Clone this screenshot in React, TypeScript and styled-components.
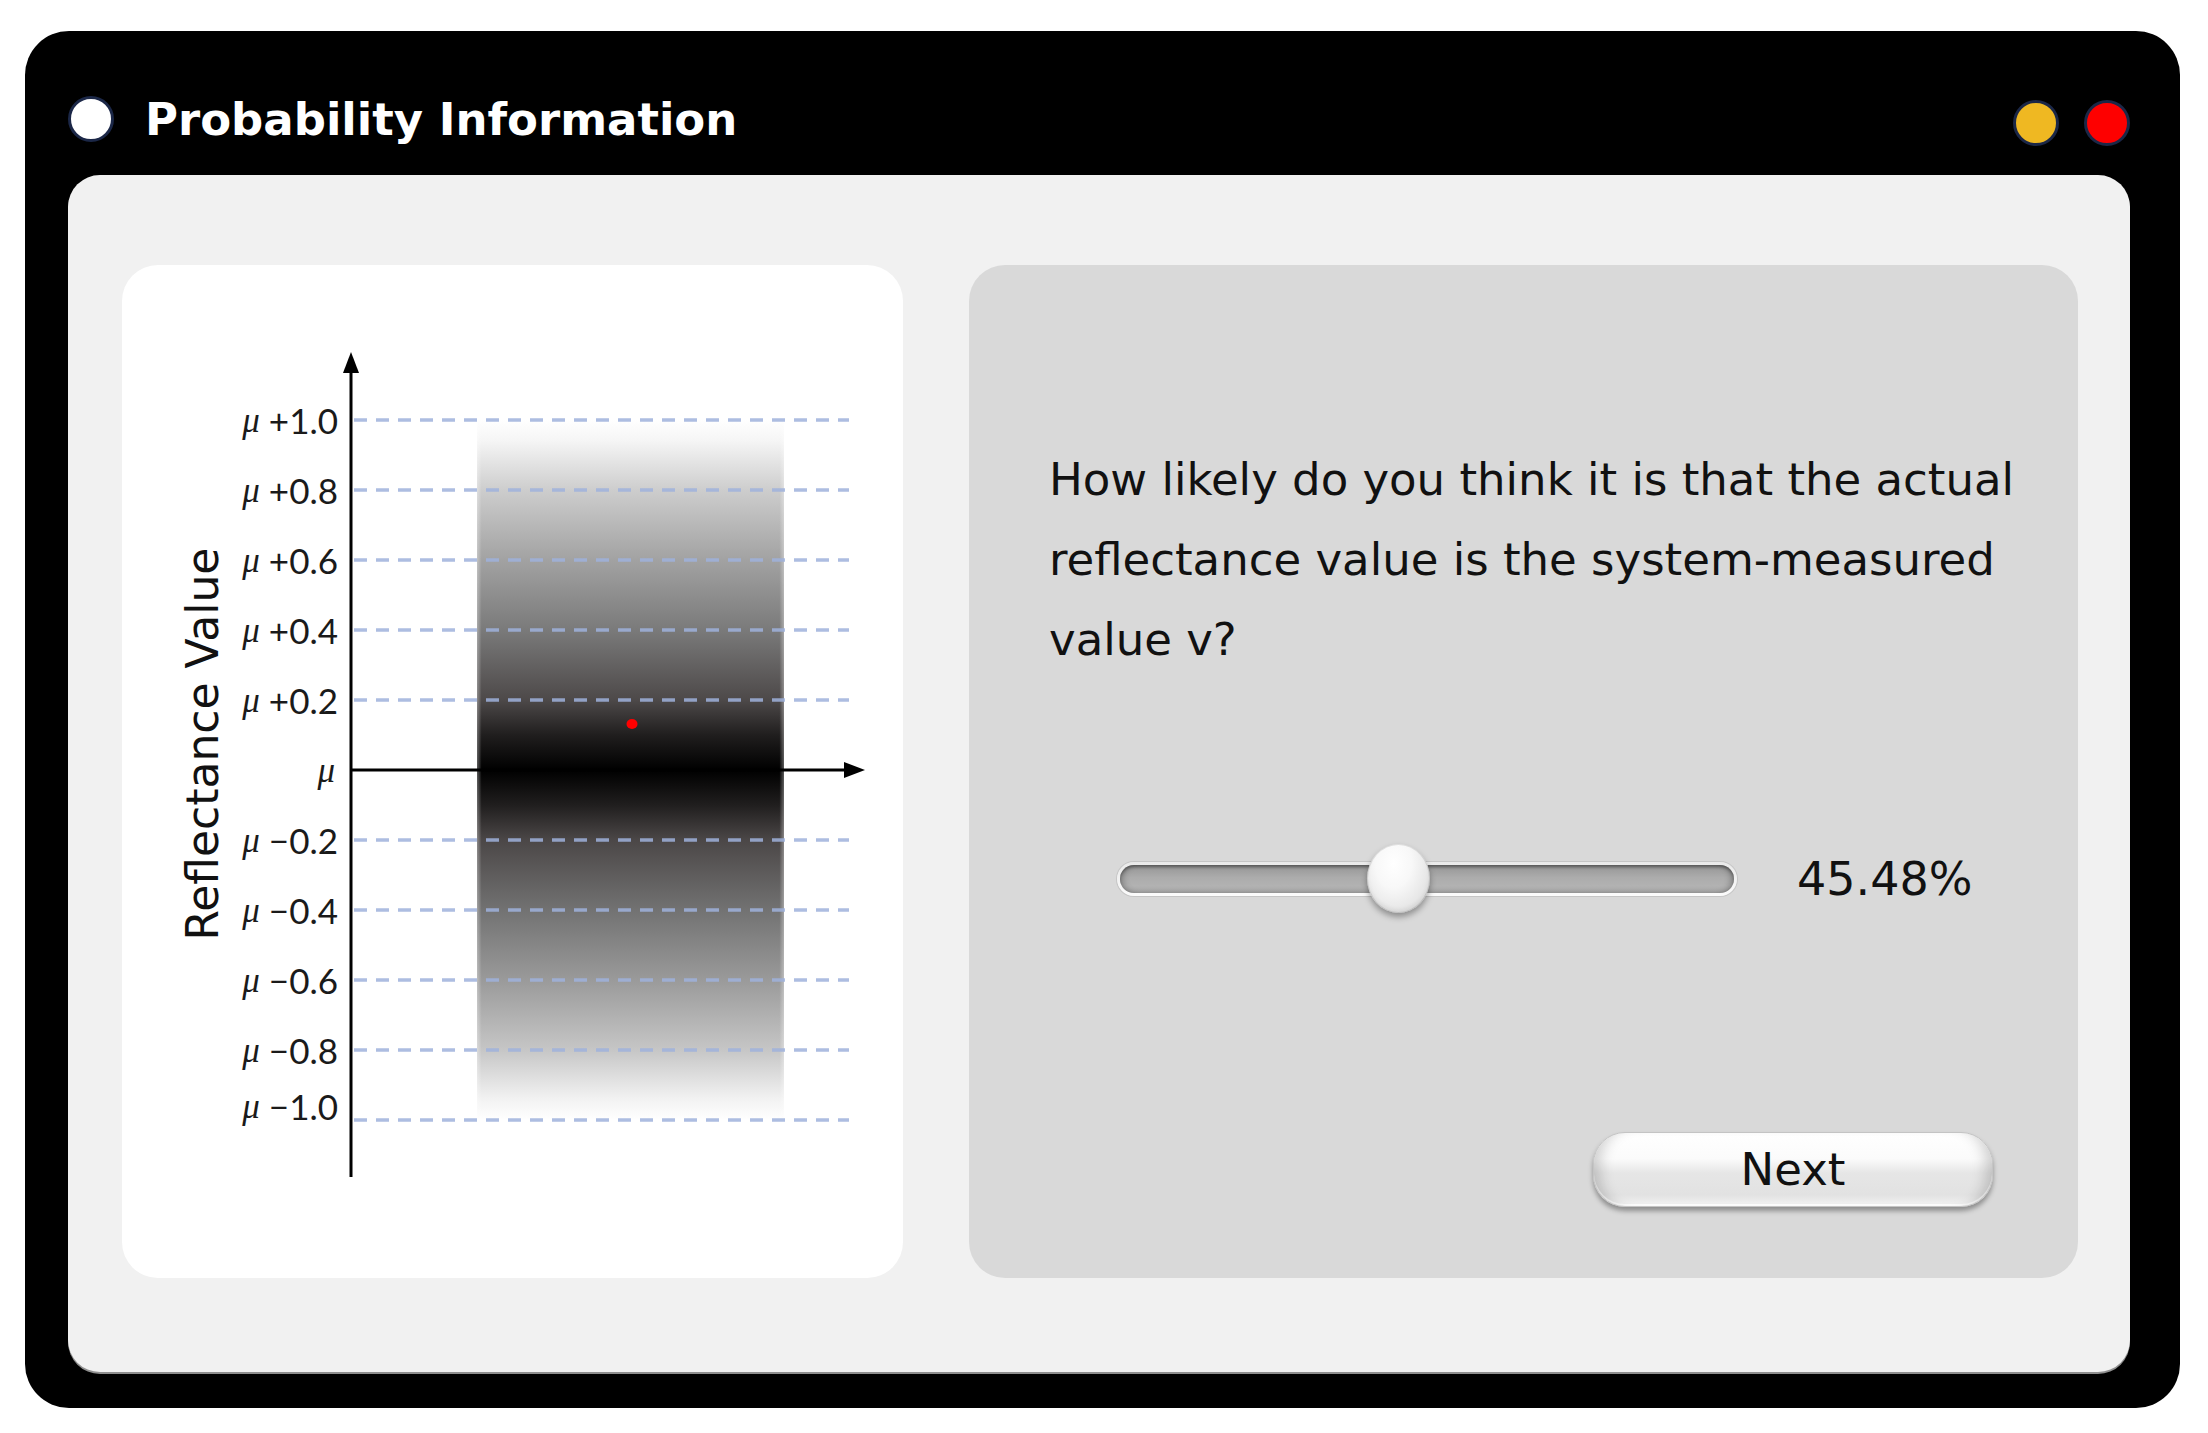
import React from "react";
import styled, { createGlobalStyle } from "styled-components";

const GlobalStyle = createGlobalStyle`
  html, body {
    margin: 0;
    padding: 0;
    background: #ffffff;
  }
  * { box-sizing: border-box; }
`;

const SANS = `"DejaVu Sans", Verdana, sans-serif`;

const Window = styled.div`
  margin: 31px 0 0 25px;
  width: 2155px;
  height: 1377px;
  background: #000000;
  border-radius: 44px;
  display: flex;
  flex-direction: column;
  padding: 0 50px 36px 43px;
`;

const TitleBar = styled.div`
  height: 144px;
  flex: 0 0 144px;
  padding-top: 32px;
  display: flex;
  align-items: center;
`;

const TitleDot = styled.span<{ $color: string; $offset?: number }>`
  width: 46px;
  height: 46px;
  border-radius: 50%;
  background: ${(p) => p.$color};
  border: 3px solid #1b2747;
  flex: 0 0 auto;
  margin-top: ${(p) => p.$offset ?? 0}px;
`;

const Title = styled.h1`
  margin: 0 0 0 31px;
  font-family: ${SANS};
  font-weight: 700;
  font-size: 45px;
  line-height: normal;
  color: #ffffff;
  flex: 1;
`;

const WindowControls = styled.div`
  display: flex;
  gap: 25px;
  align-items: center;
`;

const Panel = styled.div`
  flex: 1;
  background: #f1f1f1;
  border-radius: 32px;
  padding: 90px 52px 94px 54px;
  display: flex;
  gap: 66px;
  box-shadow: 0 2px 0 #8f8f8f;
`;

const ChartCard = styled.div`
  width: 781px;
  flex: 0 0 781px;
  background: #ffffff;
  border-radius: 36px;
  overflow: hidden;
`;

const ChartSvg = styled.svg`
  display: block;
  width: 781px;
  height: 1013px;
`;

const QuestionCard = styled.div`
  flex: 1;
  background: #d9d9d9;
  border-radius: 36px;
  padding: 175px 38px 71px 80px;
  display: flex;
  flex-direction: column;
`;

const Question = styled.p`
  margin: 0;
  font-family: ${SANS};
  font-size: 45px;
  line-height: 80px;
  color: #111111;
  height: 240px;
`;

const SliderRow = styled.div`
  margin: 164px 0 0 68px;
  height: 70px;
  display: flex;
  align-items: center;
`;

const SliderWrap = styled.div`
  position: relative;
  width: 620px;
  height: 70px;
  display: flex;
  align-items: center;
`;

const Track = styled.div`
  width: 100%;
  height: 34px;
  border-radius: 17px;
  padding: 3px;
  background: linear-gradient(to bottom, #e9e9e9, #fbfbfb);
  box-shadow: 0 0 0 1px rgba(160, 160, 160, 0.35);
`;

const TrackFill = styled.div`
  width: 100%;
  height: 100%;
  border-radius: 14px;
  background: linear-gradient(
    to bottom,
    #878787 0%,
    #9e9e9e 18%,
    #acacac 45%,
    #b2b2b2 75%,
    #a3a3a3 100%
  );
  box-shadow: inset 0 2px 3px rgba(0, 0, 0, 0.3),
    inset 6px 0 6px -3px rgba(0, 0, 0, 0.25),
    inset -6px 0 6px -3px rgba(0, 0, 0, 0.25);
`;

const Thumb = styled.div`
  position: absolute;
  top: 0;
  width: 63px;
  height: 69px;
  border-radius: 50%;
  background: radial-gradient(
    ellipse at 42% 28%,
    #ffffff 0%,
    #f8f8f8 35%,
    #e8e8e8 65%,
    #d4d4d4 100%
  );
  box-shadow: 0 4px 6px rgba(0, 0, 0, 0.35), inset 0 0 0 1px rgba(0, 0, 0, 0.1),
    inset 0 -3px 4px rgba(0, 0, 0, 0.08);
`;

const ValueText = styled.span`
  margin-left: 60px;
  font-family: ${SANS};
  font-size: 46px;
  color: #111111;
`;

const ButtonRow = styled.div`
  margin-top: 218px;
  display: flex;
  justify-content: flex-end;
  padding-right: 47px;
`;

const NextButton = styled.button`
  width: 400px;
  height: 75px;
  border-radius: 32px;
  border: 1px solid #c4c4c4;
  font-family: ${SANS};
  font-size: 45px;
  color: #111111;
  padding: 0;
  cursor: pointer;
  background: linear-gradient(
    to bottom,
    #ffffff 0%,
    #fbfbfb 35%,
    #e6e6e6 55%,
    #e2e2e2 85%,
    #f4f4f4 100%
  );
  box-shadow: 0 4px 5px rgba(0, 0, 0, 0.35),
    inset 16px 0 14px -10px rgba(0, 0, 0, 0.18),
    inset -16px 0 14px -10px rgba(0, 0, 0, 0.18),
    inset 0 -2px 0 rgba(255, 255, 255, 0.9);
`;

type Tick = { label: string; sign: string; y: number; labelY?: number; alone?: boolean };

const ticks: Tick[] = [
  { sign: "+", label: "1.0", y: 155 },
  { sign: "+", label: "0.8", y: 225 },
  { sign: "+", label: "0.6", y: 295 },
  { sign: "+", label: "0.4", y: 365 },
  { sign: "+", label: "0.2", y: 435 },
  { sign: "", label: "", y: 505, alone: true },
  { sign: "\u2212", label: "0.2", y: 575 },
  { sign: "\u2212", label: "0.4", y: 645 },
  { sign: "\u2212", label: "0.6", y: 715 },
  { sign: "\u2212", label: "0.8", y: 785 },
  { sign: "\u2212", label: "1.0", y: 855, labelY: 841 },
];

const stops: [number, string][] = [
  [0, "#ffffff"],
  [0.03, "#f5f5f5"],
  [0.1, "#cdcdcd"],
  [0.2, "#a2a2a2"],
  [0.3, "#7a7a7a"],
  [0.4, "#4d4949"],
  [0.45, "#201e1e"],
  [0.5, "#000000"],
  [0.55, "#201e1e"],
  [0.6, "#4b4747"],
  [0.7, "#727272"],
  [0.8, "#9a9a9a"],
  [0.9, "#c6c6c6"],
  [0.97, "#f2f2f2"],
  [1, "#ffffff"],
];

function Chart() {
  return (
    <ChartSvg viewBox="0 0 781 1013">
      <defs>
        <linearGradient id="density" x1="0" y1="0" x2="0" y2="1">
          {stops.map(([o, c]) => (
            <stop key={o} offset={o} stopColor={c} />
          ))}
        </linearGradient>
        <linearGradient id="edges" x1="0" y1="0" x2="1" y2="0">
          <stop offset="0" stopColor="#ffffff" stopOpacity="0.35" />
          <stop offset="0.015" stopColor="#ffffff" stopOpacity="0" />
          <stop offset="0.985" stopColor="#ffffff" stopOpacity="0" />
          <stop offset="1" stopColor="#ffffff" stopOpacity="0.35" />
        </linearGradient>
      </defs>
      <rect x="355" y="155" width="307" height="700" fill="url(#density)" />
      <rect x="355" y="155" width="307" height="700" fill="url(#edges)" />
      {ticks
        .filter((t) => !t.alone)
        .map((t) => (
          <line
            key={`g${t.y}`}
            x1="232"
            x2="727"
            y1={t.y}
            y2={t.y}
            stroke="#9fb1dc"
            strokeOpacity="0.85"
            strokeWidth="3.5"
            strokeDasharray="13 9"
          />
        ))}
      {/* axes */}
      <line x1="229" y1="100" x2="229" y2="912" stroke="#000" strokeWidth="3" />
      <polygon points="229,87 221,108 237,108" fill="#000" />
      <line x1="229" y1="505" x2="730" y2="505" stroke="#000" strokeWidth="3" />
      <polygon points="743,505 722,497 722,513" fill="#000" />
      {/* sample */}
      <ellipse cx="510" cy="459" rx="5.5" ry="5" fill="#ff0000" />
      {/* tick labels */}
      {ticks.map((t) => (
        <text
          key={`l${t.y}`}
          x={t.alone ? 213 : 216}
          y={t.labelY ?? t.y}
          textAnchor="end"
          dominantBaseline="central"
          fontFamily="Lato, 'Open Sans', sans-serif"
          fontSize="35"
          fill="#1a1a1a"
        >
          <tspan fontFamily="'Liberation Serif', serif" fontStyle="italic" fontSize="35">
            μ
          </tspan>
          {!t.alone && (
            <tspan dx="9">
              {t.sign}
              {t.label}
            </tspan>
          )}
        </text>
      ))}
      <text
        transform="translate(96 479) rotate(-90)"
        textAnchor="middle"
        fontFamily={`"DejaVu Sans", Verdana, sans-serif`}
        fontSize="44"
        fill="#111"
      >
        Reflectance Value
      </text>
    </ChartSvg>
  );
}

function Slider({ value }: { value: number }) {
  const trackWidth = 620;
  const thumbWidth = 63;
  const left = (value / 100) * trackWidth - thumbWidth / 2;
  return (
    <SliderRow>
      <SliderWrap>
        <Track>
          <TrackFill />
        </Track>
        <Thumb style={{ left }} />
      </SliderWrap>
      <ValueText>{value.toFixed(2)}%</ValueText>
    </SliderRow>
  );
}

export default function App() {
  return (
    <>
      <GlobalStyle />
      <Window>
        <TitleBar>
          <TitleDot $color="#ffffff" />
          <Title>Probability Information</Title>
          <WindowControls>
            <TitleDot $color="#efb822" $offset={8} />
            <TitleDot $color="#fe0000" $offset={8} />
          </WindowControls>
        </TitleBar>
        <Panel>
          <ChartCard>
            <Chart />
          </ChartCard>
          <QuestionCard>
            <Question>
              How likely do you think it is that the actual reflectance value is the
              system-measured value v?
            </Question>
            <Slider value={45.48} />
            <ButtonRow>
              <NextButton>Next</NextButton>
            </ButtonRow>
          </QuestionCard>
        </Panel>
      </Window>
    </>
  );
}
